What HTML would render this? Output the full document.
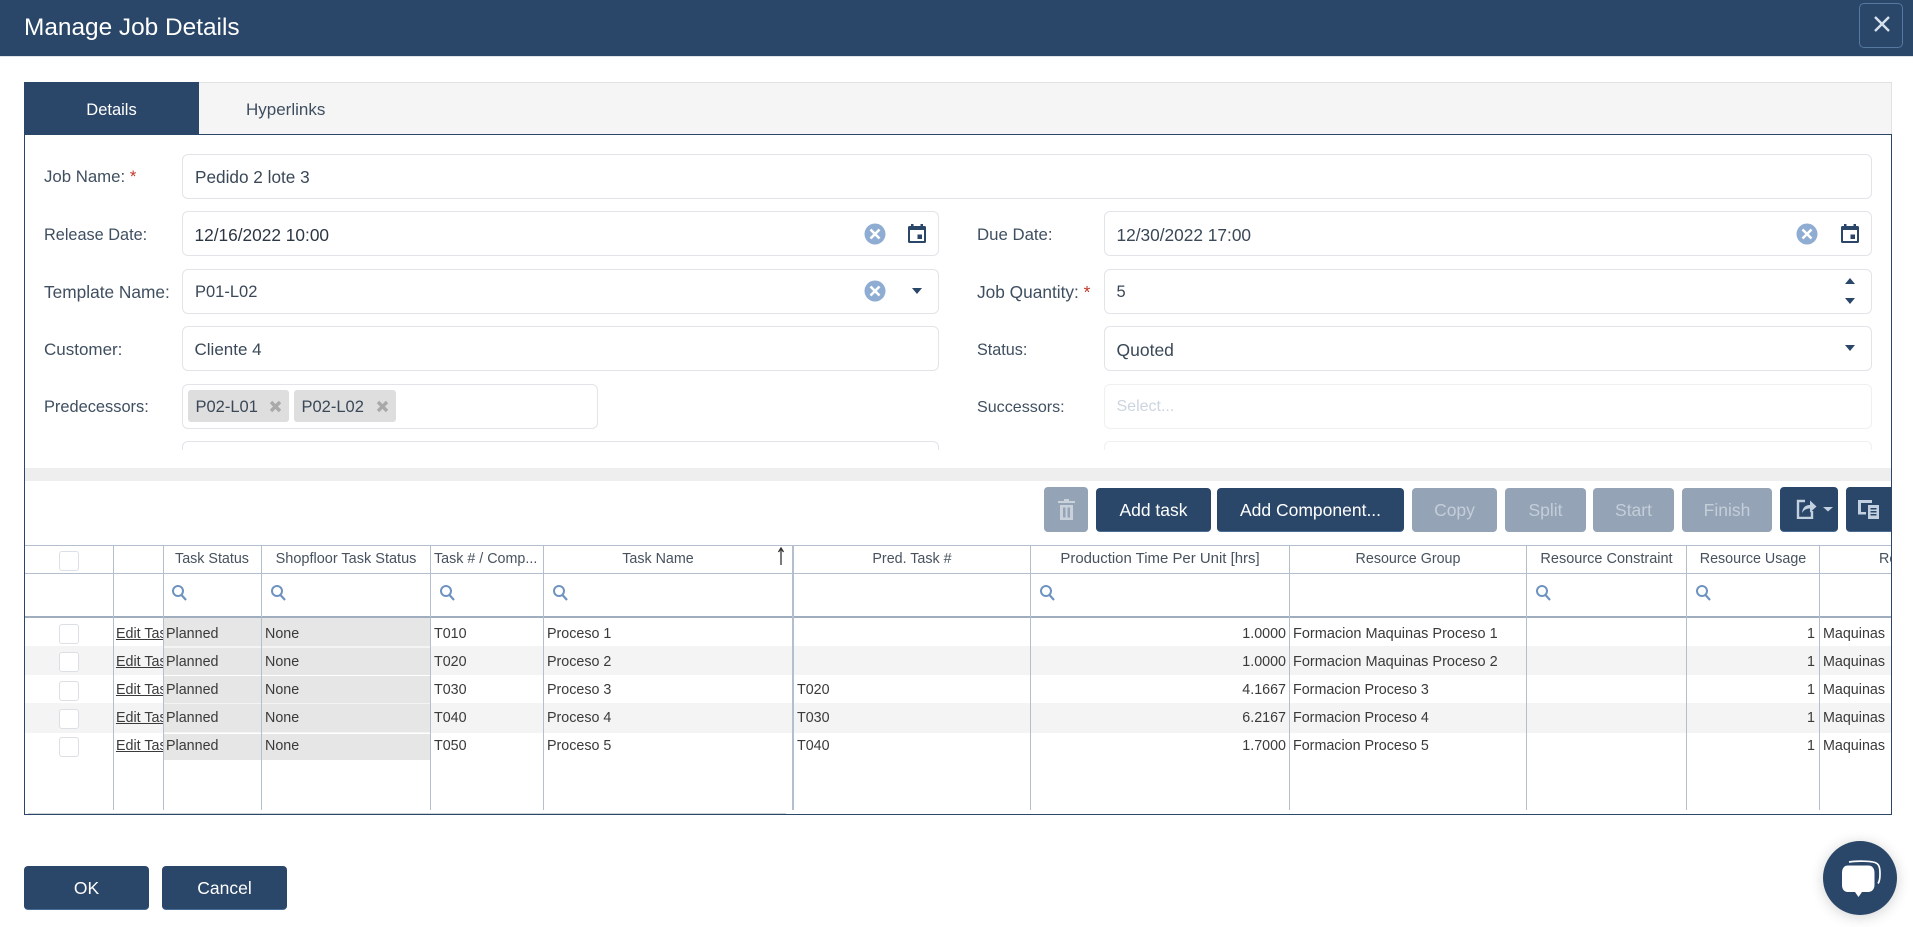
<!DOCTYPE html>
<html><head><meta charset="utf-8"><title>Manage Job Details</title>
<style>
html,body{margin:0;padding:0;width:1913px;height:927px;overflow:hidden;background:#fff;font-family:"Liberation Sans",sans-serif}
div,span,svg{box-sizing:border-box}
.a{position:absolute}
.t{position:absolute;white-space:nowrap;line-height:20px;height:20px}
.l{font-size:16.5px;color:#3f4f60}
.v{font-size:16.5px;color:#3a4857}
.in{position:absolute;border:1.5px solid #e2e4e8;border-radius:6px;background:#fff}
.s{color:#c0392b}
.btn{position:absolute;top:488px;height:44px;border-radius:4px;background:#2a4668;color:#fff;font-size:17.5px;text-align:center;line-height:44px;border-bottom:1px solid #4a6d96;white-space:nowrap}
.dis{background:#94a3b5;color:#c4ced9;border-bottom:none}
.g{font-size:14.3px;color:#3a3a3a}
.h{font-size:14.3px;color:#47525e;text-align:center;position:absolute;white-space:nowrap;line-height:20px;height:20px;top:549px}
.vl{position:absolute;top:545px;height:265px;background:#b3bfcd}
.hl{position:absolute;left:25px;width:1866px;background:#b3bfcd}
.cb{position:absolute;left:59px;width:20px;height:20px;border:1px solid #dcdfe3;border-radius:3px;background:#fff}
.gr{position:absolute;left:163px;width:267.5px;background:#e6e6e6}
.alt{position:absolute;left:25px;width:1866px;background:#f4f4f4}
.sr{position:absolute;top:584px;width:16px;height:17px}
</style></head><body>

<!-- header -->
<div class="a" style="left:0;top:0;width:1913px;height:56px;background:#2a4668"></div>
<div class="a" style="left:0;top:56px;width:1913px;height:1px;background:#dfe2e6"></div>
<div class="t" style="left:24px;top:13px;height:30px;line-height:30px;font-size:24.4px;color:#fff">Manage Job Details</div>
<div class="a" style="left:1859px;top:3px;width:44px;height:45px;border:1px solid #55799f;border-radius:5px"></div>
<svg class="a" style="left:1873px;top:15px" width="18" height="18" viewBox="0 0 18 18"><path d="M2 2L16 16M16 2L2 16" stroke="#d6e1ee" stroke-width="2.400" fill="none"/></svg>

<!-- tabs -->
<div class="a" style="left:24px;top:82px;width:1868px;height:52px;background:#f5f5f5;border:1px solid #e2e2e2;border-bottom:none"></div>
<div class="a" style="left:24px;top:82px;width:175px;height:52px;background:#2a4668"></div>
<div class="t" style="left:24px;top:100px;width:175px;text-align:center;font-size:16.5px;color:#fff">Details</div>
<div class="t" style="left:246px;top:100px;font-size:17px;color:#3f4f60">Hyperlinks</div>

<!-- panel -->
<div class="a" style="left:24px;top:134px;width:1868px;height:681px;border:1.5px solid #2a4668;background:#fff"></div>

<!-- form -->
<div class="t l" style="left:44px;top:167px;font-size:16.8px">Job Name: <span class="s">*</span></div>
<div class="in" style="left:182px;top:154px;width:1690px;height:45px"></div>
<div class="t v" style="left:195px;top:167px;font-size:17.2px">Pedido 2 lote 3</div>

<div class="t l" style="left:44px;top:225px;font-size:16.3px">Release Date:</div>
<div class="in" style="left:182px;top:211px;width:757px;height:45px"></div>
<div class="t v" style="left:194.500px;top:225px;color:#2c3744;font-size:17.300px">12/16/2022 10:00</div>
<svg class="a" style="left:863.500px;top:223px" width="22" height="22" viewBox="0 0 22 22"><circle cx="11" cy="11" r="10.500" fill="#8fadd2"/><path d="M6.500 6.500L15.500 15.500M15.500 6.500L6.500 15.500" stroke="#fff" stroke-width="2.600"/></svg>
<svg class="a" style="left:907px;top:223px" width="20" height="21" viewBox="0 0 20 21"><path d="M4 1h2.500v2h7V1H16v2h1.500A1.500 1.500 0 0 1 19 4.500v14a1.500 1.500 0 0 1-1.500 1.500h-15A1.500 1.500 0 0 1 1 18.500v-14A1.500 1.500 0 0 1 2.500 3H4z" fill="#2a4668"/><rect x="3" y="7" width="14" height="11" fill="#fff"/><rect x="10.500" y="11.500" width="4.500" height="4.500" fill="#2a4668"/></svg>

<div class="t l" style="left:977px;top:225px;font-size:16.800px">Due Date:</div>
<div class="in" style="left:1104px;top:211px;width:768px;height:45px"></div>
<div class="t v" style="left:1116.500px;top:225px;font-size:17.300px">12/30/2022 17:00</div>
<svg class="a" style="left:1796px;top:223px" width="22" height="22" viewBox="0 0 22 22"><circle cx="11" cy="11" r="10.500" fill="#8fadd2"/><path d="M6.500 6.500L15.500 15.500M15.500 6.500L6.500 15.500" stroke="#fff" stroke-width="2.600"/></svg>
<svg class="a" style="left:1840px;top:223px" width="20" height="21" viewBox="0 0 20 21"><path d="M4 1h2.500v2h7V1H16v2h1.500A1.500 1.500 0 0 1 19 4.500v14a1.500 1.500 0 0 1-1.500 1.500h-15A1.500 1.500 0 0 1 1 18.500v-14A1.500 1.500 0 0 1 2.500 3H4z" fill="#2a4668"/><rect x="3" y="7" width="14" height="11" fill="#fff"/><rect x="10.500" y="11.500" width="4.500" height="4.500" fill="#2a4668"/></svg>

<div class="t l" style="left:44px;top:282px;font-size:17.300px">Template Name:</div>
<div class="in" style="left:182px;top:269px;width:757px;height:45px"></div>
<div class="t v" style="left:195px;top:282px">P01-L02</div>
<svg class="a" style="left:863.500px;top:280px" width="22" height="22" viewBox="0 0 22 22"><circle cx="11" cy="11" r="10.500" fill="#8fadd2"/><path d="M6.500 6.500L15.500 15.500M15.500 6.500L6.500 15.500" stroke="#fff" stroke-width="2.600"/></svg>
<svg class="a" style="left:912px;top:288px" width="10" height="6" viewBox="0 0 10 6"><path d="M0 0H10L5 6Z" fill="#2a4668"/></svg>

<div class="t l" style="left:977px;top:282px;font-size:17.300px">Job Quantity: <span class="s">*</span></div>
<div class="in" style="left:1104px;top:269px;width:768px;height:45px"></div>
<div class="t v" style="left:1116.500px;top:282px">5</div>
<svg class="a" style="left:1845px;top:278px" width="10" height="6" viewBox="0 0 10 6"><path d="M0 6H10L5 0Z" fill="#2a4668"/></svg>
<svg class="a" style="left:1845px;top:298px" width="10" height="6" viewBox="0 0 10 6"><path d="M0 0H10L5 6Z" fill="#2a4668"/></svg>

<div class="t l" style="left:44px;top:340px;font-size:17px">Customer:</div>
<div class="in" style="left:182px;top:326px;width:757px;height:45px"></div>
<div class="t v" style="left:194.500px;top:340px;font-size:17px">Cliente 4</div>

<div class="t l" style="left:977px;top:340px;font-size:16.200px">Status:</div>
<div class="in" style="left:1104px;top:326px;width:768px;height:45px"></div>
<div class="t v" style="left:1116.500px;top:340px;font-size:17.500px">Quoted</div>
<svg class="a" style="left:1845px;top:345px" width="10" height="6" viewBox="0 0 10 6"><path d="M0 0H10L5 6Z" fill="#2a4668"/></svg>

<div class="t l" style="left:44px;top:397px;font-size:16.400px">Predecessors:</div>
<div class="in" style="left:182px;top:384px;width:416px;height:45px"></div>
<div class="a" style="left:188px;top:390px;width:101px;height:32px;background:#dedede;border-radius:3px"></div>
<div class="t v" style="left:195.500px;top:397px">P02-L01</div>
<svg class="a" style="left:269px;top:400px" width="13" height="13" viewBox="0 0 13 13"><path d="M2 2L11 11M11 2L2 11" stroke="#a9a9a9" stroke-width="3.400"/></svg>
<div class="a" style="left:294px;top:390px;width:102px;height:32px;background:#dedede;border-radius:3px"></div>
<div class="t v" style="left:301.500px;top:397px">P02-L02</div>
<svg class="a" style="left:376px;top:400px" width="13" height="13" viewBox="0 0 13 13"><path d="M2 2L11 11M11 2L2 11" stroke="#a9a9a9" stroke-width="3.400"/></svg>

<div class="t l" style="left:977px;top:397px;font-size:16.100px">Successors:</div>
<div class="in" style="left:1104px;top:384px;width:768px;height:45px;border-color:#eef0f2"></div>
<div class="t v" style="left:1116.500px;top:397px;color:#ccd5df;font-size:16px">Select...</div>

<div class="a" style="left:182px;top:441px;width:757px;height:9px;border:1.500px solid #e2e4e8;border-bottom:none;border-radius:6px 6px 0 0"></div>
<div class="a" style="left:1104px;top:441px;width:768px;height:9px;border:1.500px solid #eef0f2;border-bottom:none;border-radius:6px 6px 0 0"></div>

<div class="a" style="left:25px;top:468px;width:1866px;height:13px;background:#eeeeee"></div>

<!-- toolbar -->
<div class="btn dis" style="left:1044px;top:487px;width:44px;height:45px"></div>
<svg class="a" style="left:1058px;top:499px" width="17" height="21" viewBox="0 0 17 21"><path d="M6 0h5v2h6v2H0V2h6zM2 6h13v15H2zM5 8.500v10h2.500v-10zM9.500 8.500v10H12v-10z" fill="#c9d1db" fill-rule="evenodd"/></svg>
<div class="btn" style="left:1096px;width:115px">Add task</div>
<div class="btn" style="left:1217px;width:187px">Add Component...</div>
<div class="btn dis" style="left:1412px;width:85px">Copy</div>
<div class="btn dis" style="left:1505px;width:81px">Split</div>
<div class="btn dis" style="left:1593px;width:81px">Start</div>
<div class="btn dis" style="left:1682px;width:90px">Finish</div>
<div class="btn" style="left:1780px;top:487px;width:58px;height:45px"></div>
<svg class="a" style="left:1796px;top:498px" width="38" height="21" viewBox="0 0 38 21"><path d="M9 3H2v17h14v-7" fill="none" stroke="#c3d0e0" stroke-width="2.400"/><path d="M6 15C6.500 9.500 9.500 7 14 7V2.500l6.500 6-6.500 6V10.500c-3.500 0-6 1.300-8 4.500z" fill="#c3d0e0"/><path d="M27 9h10l-5 4.500z" fill="#c3d0e0"/></svg>
<div class="btn" style="left:1846px;top:487px;width:45px;height:45px;border-radius:4px 0 0 4px"></div>
<svg class="a" style="left:1858px;top:500px" width="21" height="19" viewBox="0 0 21 19"><path d="M0 0h14v3H3v9h5v2.500H0z" fill="#c3d0e0"/><path d="M10 5h11v14H10zM12.500 8v1.500h6V8zM12.500 11v1.500h6V11zM12.500 14v1.500h6V14z" fill="#c3d0e0" fill-rule="evenodd"/></svg>

<!-- grid backgrounds -->
<div class="alt" style="top:646px;height:29px"></div>
<div class="alt" style="top:703px;height:30px"></div>
<div class="gr" style="top:617px;height:29px"></div>
<div class="gr" style="top:648px;height:27px"></div>
<div class="gr" style="top:676px;height:27px"></div>
<div class="gr" style="top:704px;height:28px"></div>
<div class="gr" style="top:734px;height:26px"></div>

<!-- grid lines -->
<div class="hl" style="top:545px;height:1px"></div>
<div class="hl" style="top:573px;height:1px"></div>
<div class="hl" style="top:615.500px;height:2px;background:#9fadbe"></div>
<div class="vl" style="left:112.500px;width:1.500px"></div>
<div class="vl" style="left:162.500px;width:1.500px"></div>
<div class="vl" style="left:261px;width:1px"></div>
<div class="vl" style="left:430px;width:1px"></div>
<div class="vl" style="left:542.500px;width:1.500px"></div>
<div class="vl" style="left:792px;width:1.500px"></div>
<div class="vl" style="left:1030px;width:1px"></div>
<div class="vl" style="left:1289px;width:1px"></div>
<div class="vl" style="left:1526px;width:1px"></div>
<div class="vl" style="left:1686px;width:1px"></div>
<div class="vl" style="left:1819px;width:1px"></div>
<div class="a" style="left:28px;top:813px;width:758px;height:1px;background:#cfd4da"></div>

<!-- headers -->
<div class="cb" style="top:551px"></div>
<div class="h" style="left:163px;width:98px">Task Status</div>
<div class="h" style="left:262px;width:168px;font-size:14.500px">Shopfloor Task Status</div>
<div class="h" style="left:434px">Task # / Comp...</div>
<div class="h" style="left:544px;width:228px">Task Name</div>
<svg class="a" style="left:777px;top:547px" width="8" height="19" viewBox="0 0 8 19"><path d="M4 18V2M1.500 5L4 1l2.500 4" fill="none" stroke="#333" stroke-width="1.300"/></svg>
<div class="h" style="left:794px;width:236px">Pred. Task #</div>
<div class="h" style="left:1031px;width:258px;font-size:14.950px">Production Time Per Unit [hrs]</div>
<div class="h" style="left:1290px;width:236px">Resource Group</div>
<div class="h" style="left:1527px;width:159px;font-size:14.500px">Resource Constraint</div>
<div class="h" style="left:1687px;width:132px">Resource Usage</div>
<div class="a" style="left:1820px;top:549px;width:71px;height:20px;overflow:hidden"><div class="h" style="left:59px;top:0">Resource</div></div>

<!-- search icons -->
<svg class="sr" style="left:171px" viewBox="0 0 16 17"><circle cx="7" cy="7" r="5" fill="none" stroke="#6f93c0" stroke-width="2"/><path d="M10.500 11L15 16" stroke="#6f93c0" stroke-width="2.200"/></svg>
<svg class="sr" style="left:270px" viewBox="0 0 16 17"><circle cx="7" cy="7" r="5" fill="none" stroke="#6f93c0" stroke-width="2"/><path d="M10.500 11L15 16" stroke="#6f93c0" stroke-width="2.200"/></svg>
<svg class="sr" style="left:439px" viewBox="0 0 16 17"><circle cx="7" cy="7" r="5" fill="none" stroke="#6f93c0" stroke-width="2"/><path d="M10.500 11L15 16" stroke="#6f93c0" stroke-width="2.200"/></svg>
<svg class="sr" style="left:552px" viewBox="0 0 16 17"><circle cx="7" cy="7" r="5" fill="none" stroke="#6f93c0" stroke-width="2"/><path d="M10.500 11L15 16" stroke="#6f93c0" stroke-width="2.200"/></svg>
<svg class="sr" style="left:1039px" viewBox="0 0 16 17"><circle cx="7" cy="7" r="5" fill="none" stroke="#6f93c0" stroke-width="2"/><path d="M10.500 11L15 16" stroke="#6f93c0" stroke-width="2.200"/></svg>
<svg class="sr" style="left:1535px" viewBox="0 0 16 17"><circle cx="7" cy="7" r="5" fill="none" stroke="#6f93c0" stroke-width="2"/><path d="M10.500 11L15 16" stroke="#6f93c0" stroke-width="2.200"/></svg>
<svg class="sr" style="left:1695px" viewBox="0 0 16 17"><circle cx="7" cy="7" r="5" fill="none" stroke="#6f93c0" stroke-width="2"/><path d="M10.500 11L15 16" stroke="#6f93c0" stroke-width="2.200"/></svg>

<!-- row 1 -->
<div class="cb" style="top:624px"></div>
<div class="a" style="left:116px;top:624px;width:47px;height:20px;overflow:hidden"><div class="t g" style="left:0;top:0;text-decoration:underline">Edit Task</div></div>
<div class="t g" style="left:166px;top:624px">Planned</div><div class="t g" style="left:265px;top:624px">None</div>
<div class="t g" style="left:434px;top:624px">T010</div><div class="t g" style="left:547px;top:624px">Proceso 1</div>
<div class="t g" style="left:1186px;top:624px;width:100px;text-align:right">1.0000</div>
<div class="t g" style="left:1293px;top:624px;font-size:14.500px">Formacion Maquinas Proceso 1</div>
<div class="t g" style="left:1765px;top:624px;width:50px;text-align:right">1</div>
<div class="t g" style="left:1823px;top:624px">Maquinas</div>
<!-- row 2 -->
<div class="cb" style="top:652px"></div>
<div class="a" style="left:116px;top:652px;width:47px;height:20px;overflow:hidden"><div class="t g" style="left:0;top:0;text-decoration:underline">Edit Task</div></div>
<div class="t g" style="left:166px;top:652px">Planned</div><div class="t g" style="left:265px;top:652px">None</div>
<div class="t g" style="left:434px;top:652px">T020</div><div class="t g" style="left:547px;top:652px">Proceso 2</div>
<div class="t g" style="left:1186px;top:652px;width:100px;text-align:right">1.0000</div>
<div class="t g" style="left:1293px;top:652px;font-size:14.500px">Formacion Maquinas Proceso 2</div>
<div class="t g" style="left:1765px;top:652px;width:50px;text-align:right">1</div>
<div class="t g" style="left:1823px;top:652px">Maquinas</div>
<!-- row 3 -->
<div class="cb" style="top:681px"></div>
<div class="a" style="left:116px;top:680px;width:47px;height:20px;overflow:hidden"><div class="t g" style="left:0;top:0;text-decoration:underline">Edit Task</div></div>
<div class="t g" style="left:166px;top:680px">Planned</div><div class="t g" style="left:265px;top:680px">None</div>
<div class="t g" style="left:434px;top:680px">T030</div><div class="t g" style="left:547px;top:680px">Proceso 3</div>
<div class="t g" style="left:797px;top:680px">T020</div>
<div class="t g" style="left:1186px;top:680px;width:100px;text-align:right">4.1667</div>
<div class="t g" style="left:1293px;top:680px">Formacion Proceso 3</div>
<div class="t g" style="left:1765px;top:680px;width:50px;text-align:right">1</div>
<div class="t g" style="left:1823px;top:680px">Maquinas</div>
<!-- row 4 -->
<div class="cb" style="top:709px"></div>
<div class="a" style="left:116px;top:708px;width:47px;height:20px;overflow:hidden"><div class="t g" style="left:0;top:0;text-decoration:underline">Edit Task</div></div>
<div class="t g" style="left:166px;top:708px">Planned</div><div class="t g" style="left:265px;top:708px">None</div>
<div class="t g" style="left:434px;top:708px">T040</div><div class="t g" style="left:547px;top:708px">Proceso 4</div>
<div class="t g" style="left:797px;top:708px">T030</div>
<div class="t g" style="left:1186px;top:708px;width:100px;text-align:right">6.2167</div>
<div class="t g" style="left:1293px;top:708px">Formacion Proceso 4</div>
<div class="t g" style="left:1765px;top:708px;width:50px;text-align:right">1</div>
<div class="t g" style="left:1823px;top:708px">Maquinas</div>
<!-- row 5 -->
<div class="cb" style="top:737px"></div>
<div class="a" style="left:116px;top:736px;width:47px;height:20px;overflow:hidden"><div class="t g" style="left:0;top:0;text-decoration:underline">Edit Task</div></div>
<div class="t g" style="left:166px;top:736px">Planned</div><div class="t g" style="left:265px;top:736px">None</div>
<div class="t g" style="left:434px;top:736px">T050</div><div class="t g" style="left:547px;top:736px">Proceso 5</div>
<div class="t g" style="left:797px;top:736px">T040</div>
<div class="t g" style="left:1186px;top:736px;width:100px;text-align:right">1.7000</div>
<div class="t g" style="left:1293px;top:736px">Formacion Proceso 5</div>
<div class="t g" style="left:1765px;top:736px;width:50px;text-align:right">1</div>
<div class="t g" style="left:1823px;top:736px">Maquinas</div>

<!-- footer -->
<div class="btn" style="left:24px;top:866px;width:125px;height:44px">OK</div>
<div class="btn" style="left:162px;top:866px;width:125px;height:44px">Cancel</div>

<!-- chat -->
<div class="a" style="left:1823px;top:841px;width:74px;height:74px;border-radius:50%;background:#2a4668;box-shadow:0 2px 14px rgba(0,0,0,.18)"></div>
<svg class="a" style="left:1838px;top:856px" width="46" height="44" viewBox="0 0 46 44"><path d="M11 6C18 4.800 32 4.800 37 6.500C41 8 42 11 42 18C42 23 41.500 25.500 40 27.500" fill="none" stroke="#fff" stroke-width="1.700"/><path d="M10 9.500H30C34.500 9.500 36.500 12.500 36.500 17V29C36.500 33 34 36 30 36H24L20.500 41L17 36H10C6 36 4 33 4 29V17C4 12.500 6 9.500 10 9.500Z" fill="#fff"/></svg>

</body></html>
